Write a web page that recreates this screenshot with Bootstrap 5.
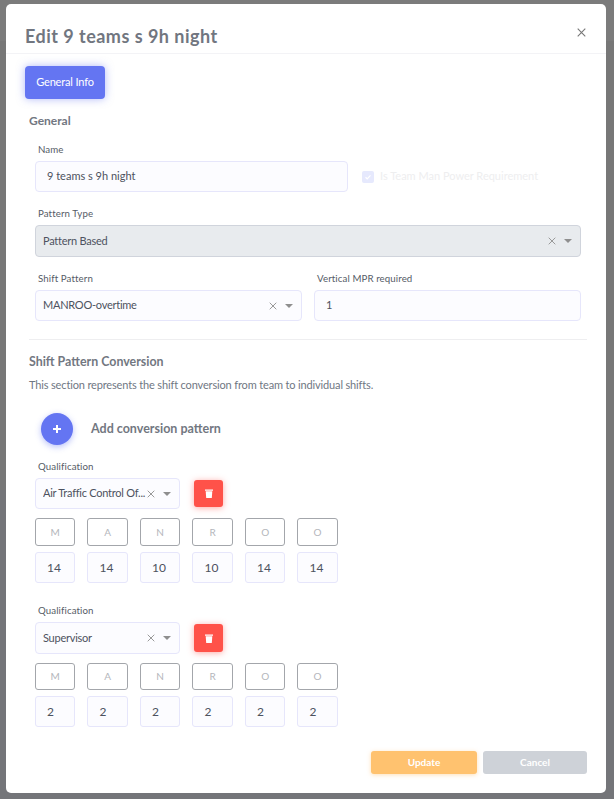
<!DOCTYPE html>
<html lang="en"><head><meta charset="utf-8">
<link href="https://cdn.jsdelivr.net/npm/bootstrap@5.3.0/dist/css/bootstrap.min.css" rel="stylesheet">
<style>
html,body{height:799px;overflow:hidden}
body{background:linear-gradient(#7b7b7b 0 41px,#777 41px 490px,#747579 490px);font-family:"Lato","Liberation Sans",sans-serif;color:#6e707e}
.shell{padding:4px 8px 6px 6px;height:799px}
.sheet{height:789px;border:0;border-radius:5px;display:block;background:#fff;position:relative}
.sheet .modal-header{height:50px;padding:17px 19px 0;border-bottom:1px solid #f3f3f6}
.ttl{font-size:18px;font-weight:700;color:#717680;margin:0;font-family:"Lato",sans-serif;letter-spacing:.48px}
.xbtn{background:none;border:0;padding:0;line-height:0;margin:-9px 1px 0 0}
.sheet .modal-body{padding:12px 19px 0}
.tabbtn{width:80px;height:33px;background:#6475f2;color:#fff;border:0;border-radius:4px;font-size:11px;letter-spacing:-.15px;box-shadow:0 0 8px rgba(100,117,242,.5);padding:0}
.sect{font-weight:700;color:#727781;margin:0;font-size:12.4px}
.h-gen{margin:15px 0 0 4px;line-height:14px;font-size:12px}
.lbl{display:block;font-size:9.7px;color:#555b66;margin:0 0 6px 3px;line-height:12px;letter-spacing:.1px}
.fld{height:31px;background:#fcfcff;border:1px solid #e6e6fb;border-radius:4px;font-size:11px;letter-spacing:-.25px;color:#4d5260;display:flex;align-items:center;padding:0 8px 0 7px;min-width:0}
.fld.txt{padding-left:11px;letter-spacing:0}
.fld .val{flex:1;white-space:nowrap;overflow:hidden;min-width:0}
.fld.off{background:#e8ebee;border-color:#d0d4dc;height:32px}
.xm{flex:none;margin:0 8px 0 0;line-height:0}
.car{flex:none;width:0;height:0;border-left:4px solid transparent;border-right:4px solid transparent;border-top:4px solid #8f8f8f}
.r-name{margin:15px 0 0 10px;width:546px}
.w-name{width:313px}
.cb{width:12px;height:12px;border-radius:2px;background:#e6e9fd;display:flex;align-items:center;justify-content:center;margin-left:14px;flex:none}
.cbt{font-size:11px;color:#eeeeef;margin-left:6px;white-space:nowrap}
.r-pat{margin:15px 0 0 10px;width:546px}
.r-two{margin:15px 0 0 10px;width:546px;gap:12px}
.r-two>div{width:267px}
.rule{margin:18px 0 0 4px;width:558px;border-top:1px solid #eeeef0;height:0;opacity:1}
.h-conv{margin:15px 0 0 4px;line-height:14px}
.desc{font-size:11px;letter-spacing:-.15px;color:#6f7783;margin:8px 0 0 4px;line-height:15px}
.addrow{margin:21px 0 0 16px;height:32px}
.addb{width:32px;height:32px;border-radius:50%;background:#6475f2;border:0;padding:0;box-shadow:0 2px 6px rgba(100,117,242,.45);display:flex;align-items:center;justify-content:center;flex:none}
.addt{font-size:12.5px;font-weight:700;color:#727781;margin-left:18px}
.qual{margin:15px 0 0 10px;width:320px}
.qual.q2{margin-top:21px}
.qrow{display:flex;align-items:center}
.w-q{width:145px;height:31px;padding-right:8px}
.binb{width:29px;height:27px;background:#ff5249;border:0;border-radius:3px;margin-left:14px;box-shadow:0 1px 6px rgba(255,82,73,.5);display:flex;align-items:center;justify-content:center;padding:0;flex:none}
.cells{display:grid;grid-template-columns:repeat(6,40.4px);column-gap:12.1px}
.cells.tags{margin-top:9px}
.cells.nums{margin-top:6px}
.tagc{height:28px;border:1px solid #a3a6ab;border-radius:3px;font-size:10px;color:#b4b6bb;display:flex;align-items:center;justify-content:center}
.numc{height:31px;background:#fcfcff;border:1px solid #e6e6fb;border-radius:3px;font-size:12px;color:#4d5260;display:flex;align-items:center;padding-left:11px}
.q2 .w-q{height:32px}
.q2 .binb{height:28px}
.q2 .tagc{height:27px}
.sheet .modal-footer{position:absolute;right:19px;bottom:19px;padding:0;border:0;gap:6px;flex-wrap:nowrap}
.upd,.cnl{height:23px;border:0;border-radius:3px;font-size:10px;font-weight:700;color:#fff;margin:0;padding:0}
.upd{width:106px;background:#ffc26f;box-shadow:0 1px 4px rgba(255,194,111,.5)}
.cnl{width:104px;background:#ced2d8}
</style></head><body>
<div class="shell">
<div class="modal-content sheet">
 <div class="modal-header d-flex justify-content-between align-items-center">
  <h5 class="ttl">Edit 9 teams s 9h night</h5>
  <button class="xbtn" type="button" aria-label="Close"><svg width="9" height="9" viewBox="0 0 9 9"><path d="M.7.7l7.6 7.6M8.3.7L.7 8.3" stroke="#777" stroke-width="1.1" fill="none"/></svg></button>
 </div>
 <div class="modal-body">
  <button class="tabbtn" type="button">General Info</button>
  <p class="sect h-gen">General</p>
  <div class="r-name">
   <label class="lbl">Name</label>
   <div class="d-flex align-items-center">
    <div class="fld txt w-name"><span class="val">9 teams s 9h night</span></div>
    <span class="cb"><svg width="8" height="8" viewBox="0 0 8 8"><path d="M1.5 4.2l1.7 1.6 3.3-3.4" stroke="#fff" stroke-width="1.2" fill="none"/></svg></span>
    <span class="cbt">Is Team Man Power Requirement</span>
   </div>
  </div>
  <div class="r-pat">
   <label class="lbl">Pattern Type</label>
   <div class="fld off"><span class="val">Pattern Based</span>
    <span class="xm"><svg width="8" height="8" viewBox="0 0 8 8"><path d="M.7.7l6.6 6.6M7.3.7L.7 7.3" stroke="#999" stroke-width="1" fill="none"/></svg></span><span class="car"></span></div>
  </div>
  <div class="r-two d-flex">
   <div><label class="lbl">Shift Pattern</label>
    <div class="fld"><span class="val">MANROO-overtime</span>
    <span class="xm"><svg width="8" height="8" viewBox="0 0 8 8"><path d="M.7.7l6.6 6.6M7.3.7L.7 7.3" stroke="#999" stroke-width="1" fill="none"/></svg></span><span class="car"></span></div></div>
   <div><label class="lbl">Vertical MPR required</label>
    <div class="fld txt"><span class="val">1</span></div></div>
  </div>
  <hr class="rule">
  <p class="sect h-conv">Shift Pattern Conversion</p>
  <p class="desc">This section represents the shift conversion from team to individual shifts.</p>
  <div class="addrow d-flex align-items-center">
   <button class="addb" type="button" aria-label="Add"><svg width="10" height="10" viewBox="0 0 10 10"><path d="M5 1v8M1 5h8" stroke="#fff" stroke-width="2" fill="none"/></svg></button>
   <span class="addt">Add conversion pattern</span>
  </div>
  <div class="qual">
   <label class="lbl">Qualification</label>
   <div class="qrow"><div class="fld w-q"><span class="val">Air Traffic Control Of...</span><span class="xm"><svg width="8" height="8" viewBox="0 0 8 8"><path d="M.7.7l6.6 6.6M7.3.7L.7 7.3" stroke="#999" stroke-width="1" fill="none"/></svg></span><span class="car"></span></div>
    <button class="binb" type="button" aria-label="Delete"><svg width="8" height="9" viewBox="0 0 8 9"><path d="M0 .6h8v1.2H0zM.7 2.3h6.6l-.5 6.7H1.2z" fill="#fff"/></svg></button></div>
   <div class="cells tags"><div class="tagc">M</div><div class="tagc">A</div><div class="tagc">N</div><div class="tagc">R</div><div class="tagc">O</div><div class="tagc">O</div></div>
   <div class="cells nums"><div class="numc">14</div><div class="numc">14</div><div class="numc">10</div><div class="numc">10</div><div class="numc">14</div><div class="numc">14</div></div>
  </div>
  <div class="qual q2">
   <label class="lbl">Qualification</label>
   <div class="qrow"><div class="fld w-q"><span class="val">Supervisor</span><span class="xm"><svg width="8" height="8" viewBox="0 0 8 8"><path d="M.7.7l6.6 6.6M7.3.7L.7 7.3" stroke="#999" stroke-width="1" fill="none"/></svg></span><span class="car"></span></div>
    <button class="binb" type="button" aria-label="Delete"><svg width="8" height="9" viewBox="0 0 8 9"><path d="M0 .6h8v1.2H0zM.7 2.3h6.6l-.5 6.7H1.2z" fill="#fff"/></svg></button></div>
   <div class="cells tags"><div class="tagc">M</div><div class="tagc">A</div><div class="tagc">N</div><div class="tagc">R</div><div class="tagc">O</div><div class="tagc">O</div></div>
   <div class="cells nums"><div class="numc">2</div><div class="numc">2</div><div class="numc">2</div><div class="numc">2</div><div class="numc">2</div><div class="numc">2</div></div>
  </div>
 </div>
 <div class="modal-footer">
  <button class="upd" type="button">Update</button>
  <button class="cnl" type="button">Cancel</button>
 </div>
</div>
</div>
<script src="https://cdn.jsdelivr.net/npm/bootstrap@5.3.0/dist/js/bootstrap.bundle.min.js"></script>
</body></html>
